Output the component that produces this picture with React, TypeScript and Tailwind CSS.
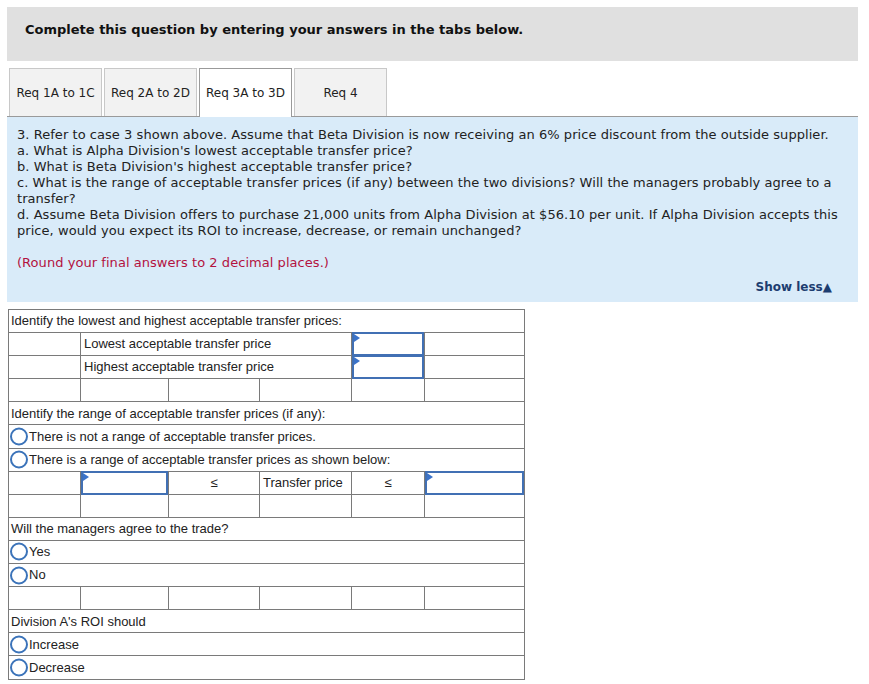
import React from "react";

const tabs = ["Req 1A to 1C", "Req 2A to 2D", "Req 3A to 3D", "Req 4"];
const activeTab = 2;

const cell = "border border-[#7a7a7a] h-[23.1px] p-0 align-middle";

function Radio({ label }: { label: string }) {
  return (
    <div className="flex items-center">
      <svg width="19" height="19" viewBox="0 0 19 19" className="ml-[1px] shrink-0">
        <circle cx="9" cy="9.5" r="8" fill="white" stroke="#3b73b9" strokeWidth="2" />
      </svg>
      <span>{label}</span>
    </div>
  );
}

function AnswerBox() {
  return (
    <div className="relative h-[24px] -my-[1px] border-2 border-[#4170b4] bg-white">
      <svg width="6" height="8" viewBox="0 0 6 8" className="absolute left-[0px] top-[0px]">
        <polygon points="0,0 6,4 0,8" fill="#3b73c9" />
      </svg>
    </div>
  );
}

function EmptyRow() {
  return (
    <tr>
      {[0, 1, 2, 3, 4, 5].map((i) => (
        <td key={i} className={cell} />
      ))}
    </tr>
  );
}

function FullRow({ children, radio }: { children: React.ReactNode; radio?: boolean }) {
  return (
    <tr>
      <td colSpan={6} className={`${cell} ${radio ? "pl-0" : "pl-[2px]"}`}>
        {children}
      </td>
    </tr>
  );
}

export default function App() {
  return (
    <div className="min-h-screen bg-white pl-[7px] pr-[11px] pt-[7px] font-['DejaVu_Sans',sans-serif] text-[#222]">
      <div className="h-[54px] bg-[#e0e0e0] pl-[18px] pt-[13px] text-[13px] font-bold text-[#111]">
        Complete this question by entering your answers in the tabs below.
      </div>

      <div className="mt-[7px] flex gap-[2px] pl-[2px]">
        {tabs.map((t, i) =>
          i === activeTab ? (
            <div
              key={t}
              className="relative z-10 -mb-[1px] flex h-[49px] w-[93px] items-center justify-center border border-b-0 border-[#9a9a9a] bg-white text-[12px]"
            >
              {t}
            </div>
          ) : (
            <div
              key={t}
              className="flex h-[48px] w-[93px] items-center justify-center border border-b-0 border-[#c8c8c8] bg-[#f2f2f2] text-[12px]"
            >
              {t}
            </div>
          )
        )}
      </div>

      <div className="border-t border-[#9a9a9a] bg-[#d9ebf9] pl-[10px] pr-[10px] pt-[10px] pb-[7px] text-[13px] leading-[16px] tracking-[0.05px]">
        <p>
          3. Refer to case 3 shown above. Assume that Beta Division is now receiving an 6% price discount from the outside supplier.
        </p>
        <p>a. What is Alpha Division's lowest acceptable transfer price?</p>
        <p>b. What is Beta Division's highest acceptable transfer price?</p>
        <p>
          c. What is the range of acceptable transfer prices (if any) between the two divisions? Will the managers probably agree to a transfer?
        </p>
        <p>
          d. Assume Beta Division offers to purchase 21,000 units from Alpha Division at $56.10 per unit. If Alpha Division accepts this price, would you expect its ROI to increase, decrease, or remain unchanged?
        </p>
        <p className="mt-[16px] text-[#b3123f]">(Round your final answers to 2 decimal places.)</p>
        <div className="mt-[8px] flex justify-end pr-[16px]">
          <span className="text-[12px] font-bold tracking-normal text-[#1d3d70]">Show less▲</span>
        </div>
      </div>

      <table className="ml-[1px] mt-[7px] w-[516px] table-fixed border-collapse font-['Liberation_Sans',Arial,sans-serif] text-[13px] text-[#222]">
        <colgroup>
          <col className="w-[72px]" />
          <col className="w-[88px]" />
          <col className="w-[91px]" />
          <col className="w-[92px]" />
          <col className="w-[73px]" />
          <col className="w-[100px]" />
        </colgroup>
        <tbody>
          <FullRow>Identify the lowest and highest acceptable transfer prices:</FullRow>
          <tr>
            <td className={cell} />
            <td colSpan={3} className={`${cell} pl-[3px]`}>
              Lowest acceptable transfer price
            </td>
            <td className={cell}>
              <AnswerBox />
            </td>
            <td className={cell} />
          </tr>
          <tr>
            <td className={cell} />
            <td colSpan={3} className={`${cell} pl-[3px]`}>
              Highest acceptable transfer price
            </td>
            <td className={cell}>
              <AnswerBox />
            </td>
            <td className={cell} />
          </tr>
          <EmptyRow />
          <FullRow>Identify the range of acceptable transfer prices (if any):</FullRow>
          <FullRow radio>
            <Radio label="There is not a range of acceptable transfer prices." />
          </FullRow>
          <FullRow radio>
            <Radio label="There is a range of acceptable transfer prices as shown below:" />
          </FullRow>
          <tr>
            <td className={cell} />
            <td className={cell}>
              <AnswerBox />
            </td>
            <td className={`${cell} text-center`}>≤</td>
            <td className={`${cell} pl-[3px]`}>Transfer price</td>
            <td className={`${cell} text-center`}>≤</td>
            <td className={cell}>
              <AnswerBox />
            </td>
          </tr>
          <EmptyRow />
          <FullRow>Will the managers agree to the trade?</FullRow>
          <FullRow radio>
            <Radio label="Yes" />
          </FullRow>
          <FullRow radio>
            <Radio label="No" />
          </FullRow>
          <EmptyRow />
          <FullRow>Division A's ROI should</FullRow>
          <FullRow radio>
            <Radio label="Increase" />
          </FullRow>
          <FullRow radio>
            <Radio label="Decrease" />
          </FullRow>
        </tbody>
      </table>
    </div>
  );
}
